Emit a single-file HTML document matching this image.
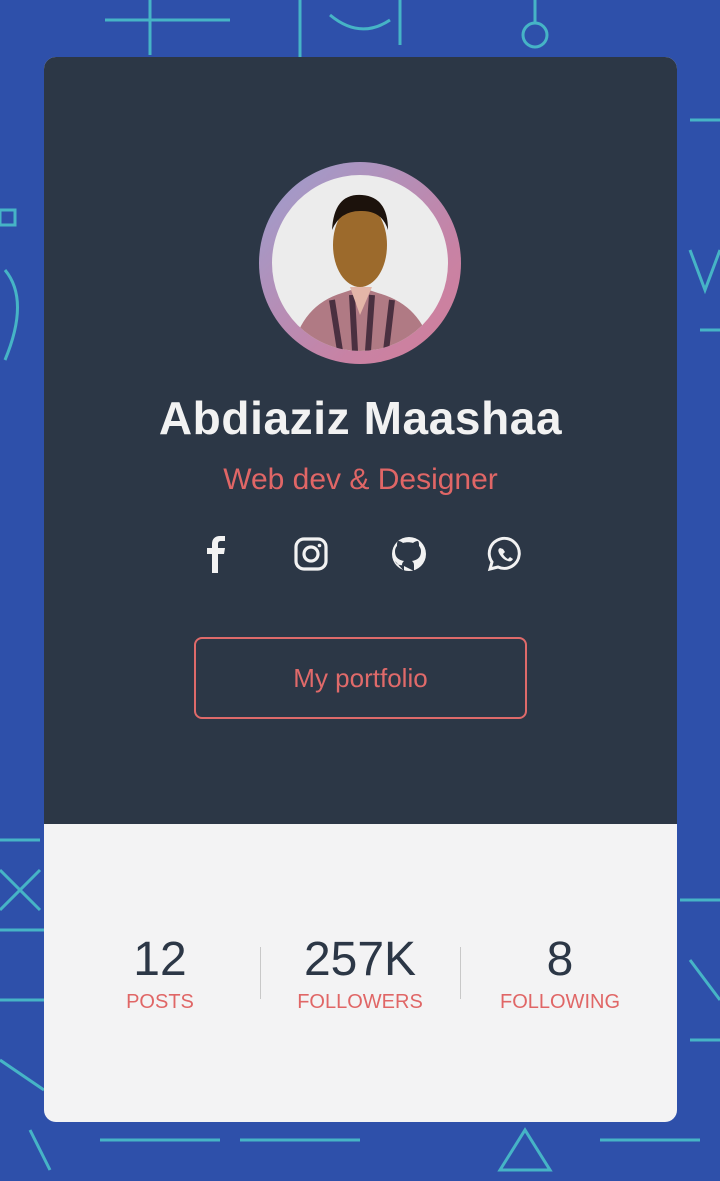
<!DOCTYPE html>
<html><head><meta charset="utf-8"><style>
html,body{margin:0;padding:0}
body{width:720px;height:1181px;position:relative;overflow:hidden;background:#2e50aa;font-family:"Liberation Sans",sans-serif}
.bg{position:absolute;inset:0}
.card{position:absolute;left:44px;top:57px;width:633px;height:1065px;border-radius:12px;overflow:hidden;background:#f3f3f4}
.top{position:absolute;left:0;top:0;width:633px;height:767px;background:#2c3746}
.ring{position:absolute;left:215px;top:105px;width:202px;height:202px;border-radius:50%;background:linear-gradient(135deg,#9b9fd0,#c882a4 70%,#d27f9a)}
.pic{position:absolute;left:13px;top:13px;width:176px;height:176px;border-radius:50%;background:#ececec;overflow:hidden}
.name{position:absolute;left:0;width:633px;top:334px;text-align:center;color:#f2f2f2;font-weight:bold;font-size:46px;letter-spacing:0.6px}
.role{position:absolute;left:0;width:633px;top:406px;text-align:center;color:#e06666;font-size:30px}
.btn{position:absolute;left:150px;top:580px;width:329px;height:78px;border:2px solid #df6a6a;border-radius:8px;color:#e06a6a;font-size:26px;text-align:center;line-height:78px}
.stat{position:absolute;top:875px;width:200px;text-align:center}
.stat b{display:block;font-weight:normal;font-size:48px;color:#2c3746;line-height:56px}
.stat span{display:block;color:#e06666;font-size:20px;margin-top:3px}
.div{position:absolute;top:890px;width:1px;height:52px;background:#c8c8c8}
</style></head><body>
<svg class="bg" width="720" height="1181" stroke="#4fd6d0" fill="none" stroke-width="3" opacity=".75">
<path d="M105 20H230M150 0V55M300 0V60M330 15Q360 40 390 20"/>
<circle cx="535" cy="35" r="12"/><path d="M535 0V23M400 0V45"/>
<path d="M0 210h15v15H0z M5 270q25 30 0 90M690 120h30M690 250l15 40 15-40M700 330h20"/>
<path d="M0 840h40M0 870l40 40M40 870L0 910M0 930h44M0 1000h44M0 1060l44 30M680 900h40M690 960l30 40M690 1040h30"/>
<path d="M100 1140h120M240 1140h120M500 1170l25-40 25 40z M600 1140h100M30 1130l20 40"/>
</svg>
<div class="card">
<div class="top">
<div class="ring"><div class="pic">
<svg width="176" height="176">
<path d="M20 176 Q30 130 70 118 L88 112 L106 118 Q150 130 160 176Z" fill="#b07a84"/>
<path d="M60 125l8 51M80 120l3 56M100 120l-4 56M120 125l-6 51" stroke="#4a3040" stroke-width="6"/>
<path d="M78 112 L88 140 L100 112Z" fill="#e4b6a8"/>
<ellipse cx="88" cy="70" rx="27" ry="42" fill="#9c6a2c"/>
<path d="M60 55 Q62 18 90 20 Q116 22 116 55 Q110 35 88 36 Q68 36 60 55Z" fill="#1c120c"/>
</svg>
</div></div>
<div class="name">Abdiaziz Maashaa</div>
<div class="role">Web dev &amp; Designer</div>
<svg style="position:absolute;left:150px;top:478px" width="340" height="40" fill="none" stroke="#f2f2f2">
<path d="M24 38V19h6l1-6h-7v-4c0-2 1-3 3-3h4V1h-5c-5 0-8 3-8 8v4h-5v6h5v19z" fill="#f2f2f2" stroke="none"/>
<rect x="102" y="4" width="30" height="30" rx="8" stroke-width="3.2"/><circle cx="117" cy="19" r="7" stroke-width="3.2"/><circle cx="125.5" cy="10.5" r="1.8" fill="#f2f2f2" stroke="none"/>
<circle cx="215" cy="19" r="17" fill="#f2f2f2" stroke="none"/>
<path d="M210 36v-6c-6 1-8-2-9-4M220 36v-6c0-2-1-3-2-4 5-1 9-3 9-10 0-2-1-4-2-5 0-2 0-4-1-5-2 0-4 1-5 2-3-1-7-1-10 0-1-1-3-2-5-2-1 1-1 3-1 5-1 1-2 3-2 5 0 7 4 9 9 10-1 1-2 2-2 4" fill="#2c3746" stroke="none"/>
<path d="M296 34l2-7a15 15 0 1 1 6 5z" stroke-width="3"/>
<path d="M306 13c-2 1-2 3-1 5 2 4 5 7 9 8 2 1 4 0 5-2l-3-2-2 2c-2-1-4-3-5-5l2-2-2-3z" fill="#f2f2f2" stroke="none"/>
</svg>
<div class="btn">My portfolio</div>
</div>
<div class="stat" style="left:16px"><b>12</b><span>POSTS</span></div>
<div class="div" style="left:216px"></div>
<div class="stat" style="left:216px"><b>257K</b><span>FOLLOWERS</span></div>
<div class="div" style="left:416px"></div>
<div class="stat" style="left:416px"><b>8</b><span>FOLLOWING</span></div>
</div>
</body></html>
